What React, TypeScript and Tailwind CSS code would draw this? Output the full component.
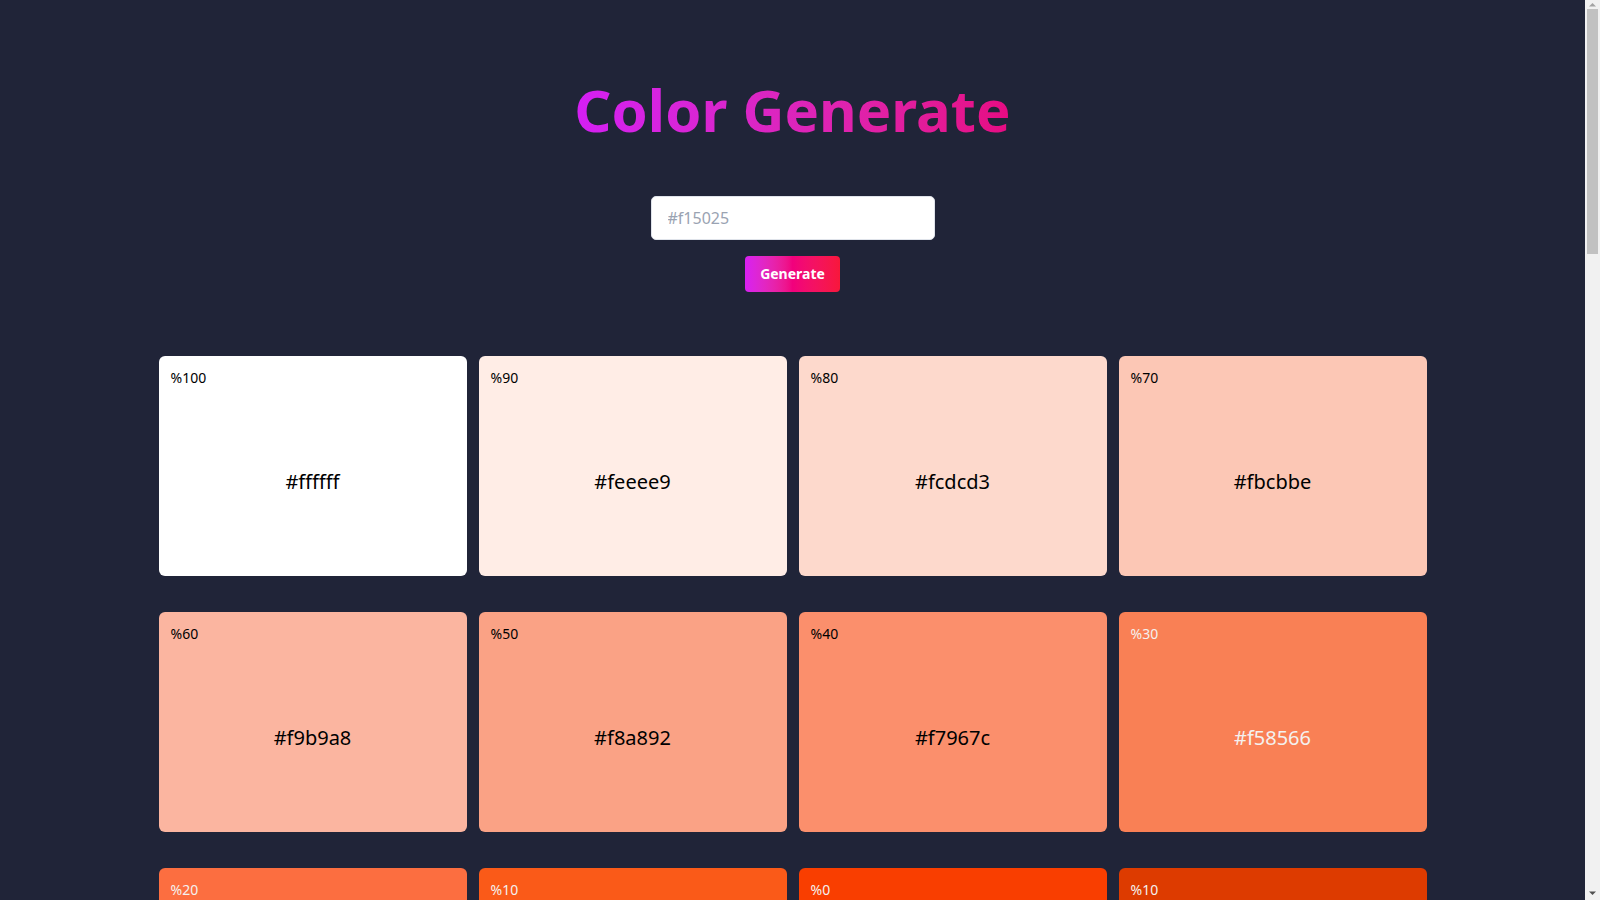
const BASE = [241, 80, 37];

type Swatch = { label: string; hex: string; light: boolean };

const SHOWN: Record<string, string> = {
  "#feeee9": "#ffede6",
  "#fcdcd3": "#fdd9cc",
  "#fbcbbe": "#fcc7b5",
  "#f9b9a8": "#fbb5a0",
  "#f8a892": "#faa285",
  "#f7967c": "#fb8f6c",
  "#f58566": "#f98055",
  "#f47351": "#fc6e40",
  "#f2623b": "#fa5a18",
  "#f15025": "#f93e00",
  "#d94821": "#dd3b00",
};

function toHex(rgb: number[]) {
  return "#" + rgb.map((v) => Math.round(v).toString(16).padStart(2, "0")).join("");
}

function buildSwatches(): Swatch[] {
  const list: Swatch[] = [];
  for (let w = 100; w >= 10; w -= 10) {
    const t = w / 100;
    list.push({ label: `%${w}`, hex: toHex(BASE.map((c) => c + (255 - c) * t)), light: false });
  }
  list.push({ label: "%0", hex: toHex(BASE), light: true });
  for (let w = 10; w <= 100; w += 10) {
    const t = w / 100;
    list.push({ label: `%${w}`, hex: toHex(BASE.map((c) => c * (1 - t))), light: true });
  }
  return list.map((s, i) => ({ ...s, light: i >= 7 }));
}

function ColorCard({ swatch }: { swatch: Swatch }) {
  return (
    <article
      className={`flex h-[220px] flex-col rounded-md p-3 ${
        swatch.light ? "text-[#f4f1ef]" : "text-black"
      }`}
      style={{ backgroundColor: SHOWN[swatch.hex] ?? swatch.hex }}
    >
      <p className="text-sm leading-5">{swatch.label}</p>
      <p className="flex flex-1 items-center justify-center pt-3 text-xl leading-7">
        {swatch.hex}
      </p>
    </article>
  );
}

function Scrollbar() {
  return (
    <aside className="flex h-screen w-[15px] shrink-0 flex-col items-center bg-[#f1f1f1]">
      <svg width="9" height="9" viewBox="0 0 9 9" className="shrink-0">
        <path d="M4.5 3 L8 6.5 L1 6.5 Z" fill="#a3a3a3" />
      </svg>
      <div className="h-[245px] w-[11px] shrink-0 bg-[#c1c1c1]" />
      <div className="flex-1" />
      <svg width="9" height="9" viewBox="0 0 9 9" className="mb-[2px] shrink-0">
        <path d="M1 2.5 L8 2.5 L4.5 6 Z" fill="#505050" />
      </svg>
    </aside>
  );
}

export default function App() {
  const swatches = buildSwatches();

  return (
    <div
      className="flex h-screen overflow-hidden bg-[#202438]"
      style={{ fontFamily: '"Noto Sans", "Open Sans", sans-serif' }}
    >
      <main className="min-w-0 flex-1 overflow-hidden pb-16">
        <section className="flex flex-col items-center pt-[72px]">
          <h1 className="bg-gradient-to-r from-[#d41ef4] to-[#e60a82] bg-clip-text text-[58px] leading-[76px] font-bold text-transparent">
            Color Generate
          </h1>
          <form
            className="mt-12 flex flex-col items-center gap-4"
            onSubmit={(e) => e.preventDefault()}
          >
            <input
              type="text"
              placeholder="#f15025"
              className="h-11 w-[284px] rounded-[5px] border border-[#dfe3ea] bg-white px-4 text-base text-[#222] outline-none placeholder:text-[#9aa3b2]"
            />
            <button
              type="submit"
              className="h-9 w-[95px] rounded bg-gradient-to-r from-[#d81ff2] via-[#f1007d] to-[#f8173a] text-sm font-bold text-white"
            >
              Generate
            </button>
          </form>
        </section>

        <section className="mx-auto mt-16 grid w-[80%] grid-cols-4 gap-x-3 gap-y-9">
          {swatches.map((s, i) => (
            <ColorCard key={i} swatch={s} />
          ))}
        </section>
      </main>
      <Scrollbar />
    </div>
  );
}
